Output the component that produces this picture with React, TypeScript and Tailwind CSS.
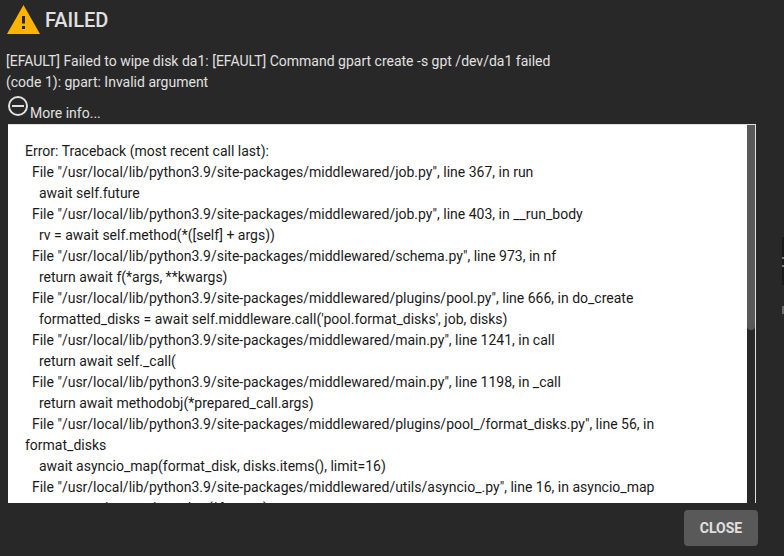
const traceback = [
  'Error: Traceback (most recent call last):',
  '  File "/usr/local/lib/python3.9/site-packages/middlewared/job.py", line 367, in run',
  '    await self.future',
  '  File "/usr/local/lib/python3.9/site-packages/middlewared/job.py", line 403, in __run_body',
  '    rv = await self.method(*([self] + args))',
  '  File "/usr/local/lib/python3.9/site-packages/middlewared/schema.py", line 973, in nf',
  '    return await f(*args, **kwargs)',
  '  File "/usr/local/lib/python3.9/site-packages/middlewared/plugins/pool.py", line 666, in do_create',
  "    formatted_disks = await self.middleware.call('pool.format_disks', job, disks)",
  '  File "/usr/local/lib/python3.9/site-packages/middlewared/main.py", line 1241, in call',
  '    return await self._call(',
  '  File "/usr/local/lib/python3.9/site-packages/middlewared/main.py", line 1198, in _call',
  '    return await methodobj(*prepared_call.args)',
  '  File "/usr/local/lib/python3.9/site-packages/middlewared/plugins/pool_/format_disks.py", line 56, in format_disks',
  '    await asyncio_map(format_disk, disks.items(), limit=16)',
  '  File "/usr/local/lib/python3.9/site-packages/middlewared/utils/asyncio_.py", line 16, in asyncio_map',
  '    return await asyncio.gather(*futures)',
].join("\n");

export default function App() {
  return (
    <div className="relative h-[556px] w-[784px] overflow-hidden bg-[#282828] font-['Roboto',sans-serif] text-[#e0e0e0]">
      {/* page behind the dialog shows through on the right edge */}
      <div className="absolute top-[237px] right-0 h-[48px] w-[2px] bg-[#1a1a1a]" />
      <div className="absolute top-[257px] right-0 h-[2px] w-[2px] bg-[#7a7a7a]" />
      <div className="absolute top-[265px] right-0 h-[2px] w-[2px] bg-[#7a7a7a]" />
      <div className="absolute top-[306px] right-0 h-[8px] w-[2px] bg-[#6a6a6a]" />
      <div className="flex h-[37px] items-center pl-[7px] pt-[2px]">
        <svg width="33" height="29" viewBox="0 0 33 29" className="text-[#fdb300]">
          <path d="M16.5 0 33 29H0Z" fill="currentColor" />
          <rect x="15" y="11" width="3" height="7.5" fill="#282828" />
          <rect x="15" y="21" width="3" height="3" fill="#282828" />
        </svg>
        <h1 className="ml-[5px] text-[20px] leading-none font-medium">FAILED</h1>
      </div>
      <p className="mt-[14px] w-[560px] pl-[6px] text-sm leading-[21px] font-normal">
        [EFAULT] Failed to wipe disk da1: [EFAULT] Command gpart create -s gpt /dev/da1 failed (code 1): gpart: Invalid argument
      </p>
      <div className="flex h-[29px] items-end pl-[7px]">
        <svg width="22" height="22" viewBox="0 0 22 22" fill="none" stroke="currentColor" strokeWidth="2" className="mb-[5px]">
          <circle cx="11" cy="11" r="9" />
          <path d="M5 11h12" />
        </svg>
        <span className="ml-px text-sm leading-[17px]">More info...</span>
      </div>
      <div className="mt-[2px] ml-[8px] h-[379px] w-[748px] border-t border-r border-[#e0e0e0]">
        <div className="flex h-full">
          <pre className="h-full w-[739px] overflow-hidden bg-white pt-[16px] pr-[80px] pl-[17px] font-['Roboto',sans-serif] text-sm leading-[21px] whitespace-pre-wrap text-[#1a1a1a]">
            {traceback}
          </pre>
          <div className="h-full w-2 bg-[#282828]">
            <div className="h-[205px] rounded-b-[4px] bg-[#595959]" />
          </div>
        </div>
      </div>
      <div className="flex justify-end pt-[7px] pr-[26px]">
        <button className="h-[36px] w-[74px] rounded-[4px] bg-[#595959] text-sm font-bold text-[#e0e0e0]">CLOSE</button>
      </div>
    </div>
  );
}
